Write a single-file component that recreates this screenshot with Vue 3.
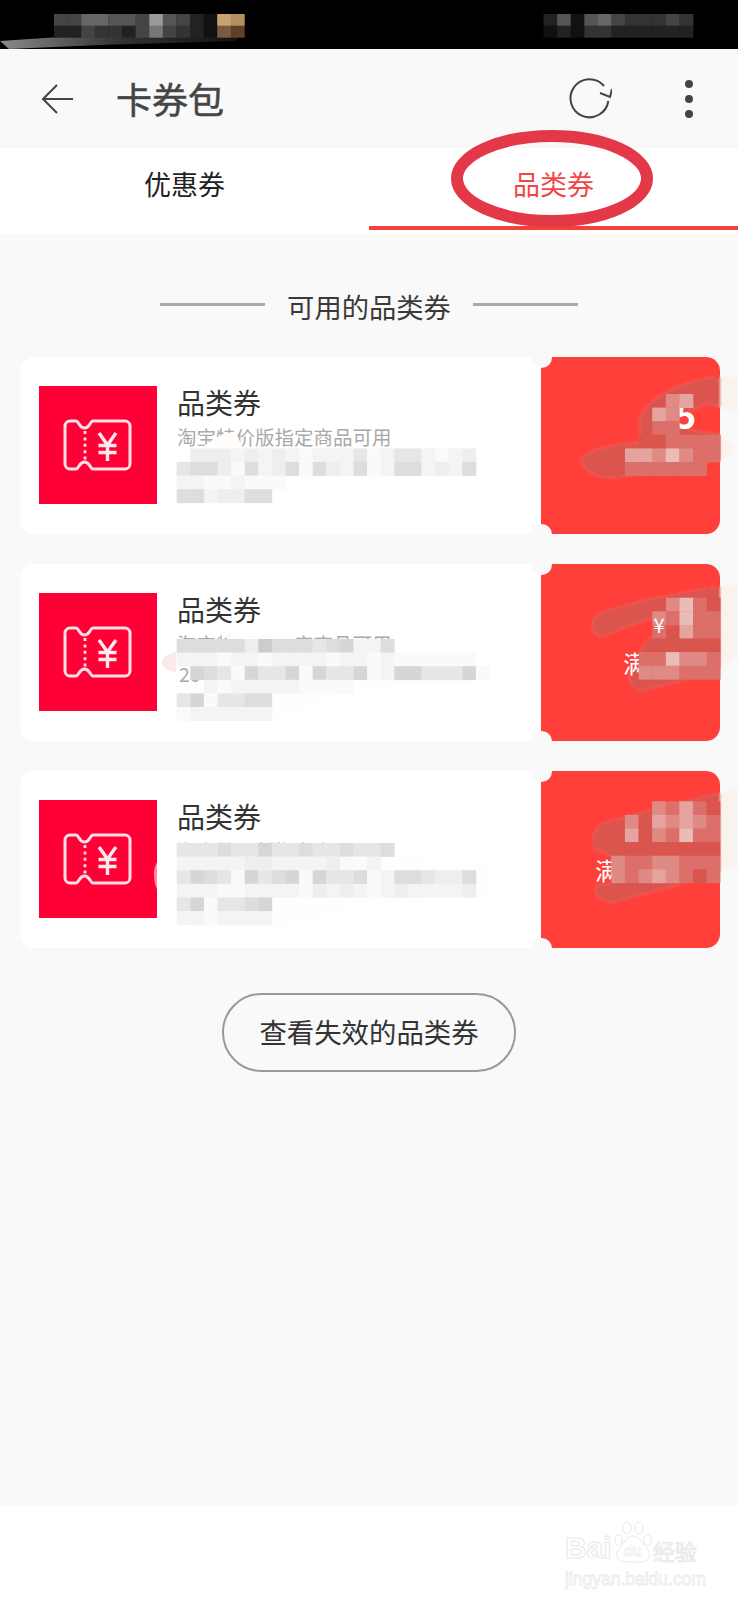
<template>
  <div class="page">
    <div class="status">
      <svg class="status-art" width="738" height="49" viewBox="0 0 738 49">
        <defs>
          <linearGradient id="smear" x1="0" x2="1" y1="0" y2="0">
            <stop offset="0" stop-color="#8a8a8a" />
            <stop offset="0.5" stop-color="#333" />
            <stop offset="1" stop-color="#111" />
          </linearGradient>
        </defs>
        <path d="M0 41 L60 37 L240 37 L235 41 L100 45 L9 49 Z" fill="url(#smear)" />
        <circle cx="561" cy="34" r="2" fill="#ddd" />
        <rect v-for="c in statusCells" :key="c.key" :x="c.x" :y="c.y" :width="c.w" :height="c.h" :fill="c.fill" />
      </svg>
    </div>

    <header class="topbar">
      <svg class="back" width="34" height="32" viewBox="0 0 34 32">
        <path d="M33 16 H3 M17 2 L3 16 L17 30" fill="none" stroke="#444" stroke-width="2" />
      </svg>
      <h1 class="title">卡券包</h1>
      <svg class="refresh" width="46" height="46" viewBox="0 0 46 46">
        <path d="M42.3 25 A19 19 0 1 1 38 10" fill="none" stroke="#444" stroke-width="2" />
        <path d="M34 17 L44 21 L46 13" fill="none" stroke="#444" stroke-width="2" />
      </svg>
      <div class="dots"><span></span><span></span><span></span></div>
    </header>

    <nav class="tabs">
      <div class="tab">优惠券</div>
      <div class="tab active">品类券</div>
    </nav>

    <main class="content">
      <div class="section-title">
        <span class="rule"></span>
        <span>可用的品类券</span>
        <span class="rule"></span>
      </div>

      <div class="cards">
        <div v-for="(card, i) in cards" :key="i" class="card-row">
          <div class="card">
            <div class="card-main">
              <div class="thumb">
                <svg width="118" height="118" viewBox="0 0 118 118">
                  <path
                    d="M31 35 H37 C40 35 40 42 45.5 42 C51 42 51 35 54 35 H86 a5 5 0 0 1 5 5 V78 a5 5 0 0 1 -5 5 H54 C51 83 51 76 45.5 76 C40 76 40 83 37 83 H31 a5 5 0 0 1 -5 -5 V40 a5 5 0 0 1 5 -5 Z"
                    fill="none" stroke="#ffdfe5" stroke-width="3"
                  />
                  <path d="M46 45 V74" fill="none" stroke="#ffdfe5" stroke-width="2.8" stroke-dasharray="3 3.4" />
                  <path d="M60 47 L68.5 59 L77 47 M59.5 59.5 H77.5 M59.5 66.5 H77.5 M68.5 59 V75" fill="none" stroke="#ffeaee" stroke-width="3.4" />
                </svg>
              </div>
              <div class="info">
                <div class="info-title">品类券</div>
                <div class="info-sub">淘宝特价版指定商品可用</div>
              </div>
            </div>
            <div class="stub"></div>
          </div>

          <!-- hand-drawn smears and mosaic that hide the private bits -->
          <svg class="smears" width="738" height="178" viewBox="0 0 738 178">
            <defs>
              <clipPath :id="`stub-${i}`"><rect x="541" y="0" width="179" height="177" rx="13" /></clipPath>
            </defs>
            <g class="soft">
              <path :d="card.smear" fill="#f9f3ef" />
              <path :d="card.smear" fill="#dc544e" :clip-path="`url(#stub-${i})`" />
            </g>
            <text v-for="t in card.stubText" :key="t.s" class="frag" :class="t.cls" :x="t.x" :y="t.y">{{ t.s }}</text>
            <path v-if="card.pink" :d="card.pink" :fill="card.pinkFill" :opacity="card.pinkOpacity" />
            <path :d="card.blot" fill="#fffefd" />
            <text v-for="t in card.textBits" :key="t.s" class="bit" :x="t.x" :y="t.y">{{ t.s }}</text>
            <g class="pixels">
              <rect v-for="c in cellsOf(card)" :key="c.key" :x="c.x" :y="c.y" :width="c.w" :height="c.h" :fill="c.fill" />
            </g>
            <text v-if="card.yen" class="frag yen" x="659" y="69">¥</text>
          </svg>
        </div>
      </div>

      <button class="expired">查看失效的品类券</button>
    </main>

    <footer class="footer">
      <div class="mark">
        <div class="mark-top">
          <span class="mark-bai">Bai</span>
          <svg class="paw" width="38" height="42" viewBox="0 0 38 42">
            <g fill="none" stroke="#e8e8e8" stroke-width="1">
              <ellipse cx="4.5" cy="19" rx="3.8" ry="5.5" />
              <ellipse cx="13" cy="7" rx="4.2" ry="6" />
              <ellipse cx="25" cy="7" rx="4.2" ry="6" />
              <ellipse cx="33.5" cy="19" rx="3.8" ry="5.5" />
              <path d="M19 15 C27 15 28 24 33 28 C38 33 35 41 27 41 H11 C3 41 0 33 5 28 C10 24 11 15 19 15 Z" />
            </g>
            <text class="paw-du" x="19" y="35">du</text>
          </svg>
          <span class="mark-cn">经验</span>
        </div>
        <div class="mark-url">jingyan.baidu.com</div>
      </div>
    </footer>

    <svg class="oval" width="202" height="97" viewBox="0 0 202 97">
      <ellipse cx="101" cy="48.5" rx="95" ry="42.5" fill="none" stroke="#e23848" stroke-width="12" />
    </svg>
  </div>
</template>

<script setup>
const CELL = 13.6
const tones = {
  // smear tones over the red stub
  A: '#d9554e',
  B: '#dd6f6a',
  C: '#e08a85',
  D: '#e6a4a0',
  E: '#e9bcb8',
  // pale tones over the white card
  i: '#d6d6d6',
  h: '#e6e6e6',
  g: '#f4f4f4',
  j: '#fafafa',
  // skin coloured bit in the status bar
  T: '#c9a070',
  U: '#b58f60',
  V: '#7a5a40',
  W: '#5f3f25',
}
const shade = (ch) => tones[ch] || `#${ch}${ch}${ch}`

function toCells(blocks, prefix) {
  const out = []
  blocks.forEach((b, bi) => {
    b.rows.forEach((row, r) => {
      ;[...row].forEach((ch, col) => {
        if (ch === '-') return
        out.push({
          key: `${prefix}${bi}-${r}-${col}`,
          x: b.x + col * CELL,
          y: b.y + r * (b.rh || CELL),
          w: CELL + 0.3,
          h: (b.rh || CELL) + 0.3,
          fill: shade(ch),
        })
      })
    })
  })
  return out
}

const statusCells = toCells(
  [
    { x: 54, y: 14, rh: 11.7, rows: ['446655495421TU', '224332474321VW'] },
    { x: 543.5, y: 14, rh: 11.7, rows: ['25156433343', '12133222222'] },
  ],
  's',
)

const cellsOf = (card) => toCells(card.blocks, 'c')

const cards = [
  {
    stubText: [{ s: '5', cls: 'big', x: 675, y: 72 }],
    smear:
      'M639 66 C642 45 672 26 715 20 L738 20 L738 55 L722 51 L707 46 L663 68 L722 78 L733 88 L733 98 L715 103 C690 110 650 118 605 121 C590 118 580 110 582 101 C590 92 615 87 642 85 Z',
    blot: 'M172 113 L208 86 L225 76 L236 76 L243 91 L476 96 L478 119 L280 125 L276 150 L176 150 Z',
    blocks: [
      {
        x: 176.7,
        y: 91.4,
        rows: ['-eeegegegjggghjghhgjge', 'hddejdgedjdegdjgddgegd', 'ggjjgjjj', 'ddgeedd'],
      },
      { x: 625, y: 37, rows: ['---CD--', '--DC---', '--BB---', '-AABBBB', 'DDCECBB', 'BBBBBB-'] },
    ],
    textBits: [],
  },
  {
    yen: true,
    stubText: [{ s: '满', cls: 'mid', x: 623, y: 109 }],
    smear:
      'M592 61 C592 53 600 48 610 46 C630 40 640 37 660 33 L707 24 L738 21 L738 93 L720 103 L693 114 L640 127 C632 123 628 118 630 111 L642 83 L650 74 L673 61 L652 54 L623 64 L603 73 C596 72 592 68 592 61 Z',
    pink: 'M176 88 C165 90 161 96 162 100 C163 104 170 108 176 108 Z',
    pinkFill: '#fbe9e9',
    pinkOpacity: 1,
    blot: 'M176 75 L226 75 L232 69 L290 69 L297 75 L395 75 L395 89 L470 91 L480 105 L470 118 L350 125 L276 155 L176 155 Z',
    blocks: [
      {
        x: 176.7,
        y: 75,
        rows: [
          'dddddecdddhdiggd',
          'gggjggjggggjggjgjjjjjj',
          '-idhjihhijihhijgiihhhij',
          '--gjgggggjjjj',
          'hijhhdd',
          'jgggggg',
        ],
      },
      { x: 638.7, y: 33.7, rows: ['--CEBA', '-CBEBB', '-B-DBB', '-AAAAA', 'BBECCB', 'CCCBBB'] },
    ],
    textBits: [
      { s: '20', x: 179, y: 118 },
      { s: '(', x: 179, y: 148 },
    ],
  },
  {
    stubText: [{ s: '满', cls: 'mid', x: 595, y: 109 }],
    smear:
      'M593 69 C594 60 598 54 603 52 L650 39 L720 22 L738 17 L738 94 L720 100 L677 114 L610 132 L597 125 L595 115 L610 112 L610 85 L605 82 L593 77 Z',
    pink: 'M176 72 C160 82 153 95 154 104 C154 118 162 130 176 145 Z',
    pinkFill: '#fff',
    pinkOpacity: 0.55,
    blot: 'M176 72 L395 72 L395 85 L490 95 L490 125 L350 135 L272 160 L200 160 C180 150 176 140 176 72 Z',
    blocks: [
      {
        x: 176.7,
        y: 72,
        rows: [
          'hhhdhhihhdhhdhhd',
          'gggggeeggggejjg',
          'hidhjihdijihhdjgddheed',
          'gggjjggggjegegjgegggge',
          'hijhhdi',
          'ggjgggg',
        ],
      },
      {
        x: 611.3,
        y: 30.3,
        rows: ['---CBDBA', '-CADCDCB', '-DACBEBB', 'AAAAAAAA', 'CBBCCBBB', 'CBCDCBAB'],
      },
    ],
    textBits: [{ s: 'C', x: 179, y: 149 }],
  },
]
</script>

<style scoped>
.page {
  position: relative;
  width: 738px;
  height: 1600px;
  overflow: hidden;
  display: flex;
  flex-direction: column;
  background: #f9f9f9;
  font-family: "Noto Sans CJK SC", "Liberation Sans", sans-serif;
  color: #333;
}
.status {
  height: 49px;
  background: #000;
  flex: none;
}
.status-art {
  display: block;
}
.topbar {
  height: 99px;
  flex: none;
  display: flex;
  align-items: center;
  padding-left: 40px;
}
.back {
  flex: none;
}
.title {
  margin: 0 0 2px 42px;
  font-size: 36px;
  font-weight: 400;
  -webkit-text-stroke: 0.5px #454545;
  color: #454545;
  line-height: 1;
  flex: 1;
}
.refresh {
  margin-right: 73px;
}
.dots {
  display: flex;
  flex-direction: column;
  gap: 7px;
  margin-right: 45px;
}
.dots span {
  width: 8px;
  height: 8px;
  border-radius: 50%;
  background: #444;
}
.tabs {
  height: 86px;
  flex: none;
  background: #fff;
  display: flex;
}
.tab {
  width: 50%;
  height: 82px;
  box-sizing: border-box;
  line-height: 72px;
  text-align: center;
  font-size: 27px;
  color: #222;
}
.tab.active {
  color: #ef4747;
  border-bottom: 4px solid #f5403c;
}
.content {
  flex: 1;
  display: flex;
  flex-direction: column;
  align-items: center;
}
.section-title {
  margin-top: 52px;
  height: 40px;
  display: flex;
  align-items: center;
  gap: 22px;
  font-size: 27.3px;
  color: #3a3a3a;
}
.rule {
  width: 105px;
  height: 3px;
  margin-bottom: 4px;
  background: #aaa;
}
.cards {
  margin-top: 31px;
  width: 100%;
  display: flex;
  flex-direction: column;
  gap: 30px;
}
.card-row {
  position: relative;
  height: 177px;
}
.card {
  margin: 0 18px 0 20px;
  height: 177px;
  display: flex;
  border-radius: 14px;
  overflow: hidden;
}
.card-main {
  width: 521px;
  background: #fff;
  display: flex;
  padding: 29px 0 0 19px;
  box-sizing: border-box;
}
.thumb {
  width: 118px;
  height: 118px;
  background: #ff0036;
  flex: none;
}
.thumb svg {
  display: block;
}
.info {
  margin: -2px 0 0 20px;
}
.info-title {
  font-size: 28px;
  line-height: 36px;
  color: #333;
}
.info-sub {
  margin-top: 3px;
  font-size: 19.5px;
  line-height: 28px;
  color: #a9a9a9;
}
.stub {
  position: relative;
  flex: 1;
  background: #ff403a;
}
.stub::before,
.stub::after {
  content: "";
  position: absolute;
  left: -10.5px;
  width: 21px;
  height: 21px;
  border-radius: 50%;
  background: #f9f9f9;
}
.stub::before {
  top: -10.5px;
}
.stub::after {
  bottom: -10.5px;
}
.smears {
  position: absolute;
  left: 0;
  top: 0;
  pointer-events: none;
}
.soft {
  filter: blur(1px);
}
.pixels {
  filter: blur(0.5px);
}
.frag {
  fill: #fff;
  font-family: "Noto Sans CJK SC", "Liberation Sans", sans-serif;
}
.frag.big {
  font-size: 36px;
  font-weight: 700;
}
.frag.mid {
  font-size: 24px;
}
.frag.yen {
  font-size: 20px;
  text-anchor: middle;
}
.bit {
  fill: #a9a9a9;
  font-size: 19.5px;
  font-family: "Noto Sans CJK SC", "Liberation Sans", sans-serif;
}
.expired {
  margin-top: 45px;
  width: 294px;
  height: 79px;
  padding: 0 0 4px;
  border: 2px solid #999;
  border-radius: 40px;
  background: transparent;
  font-family: inherit;
  font-size: 27.4px;
  color: #333;
}
.footer {
  height: 95px;
  flex: none;
  background: #fff;
  display: flex;
  justify-content: flex-end;
  padding: 16px 32px 0 0;
  box-sizing: border-box;
}
.mark-top {
  display: flex;
  align-items: flex-end;
  height: 42px;
}
.mark-bai {
  font-family: "Liberation Sans", sans-serif;
  font-weight: 700;
  font-size: 30px;
  line-height: 30px;
  color: #fff;
  -webkit-text-stroke: 1px #e8e8e8;
}
.paw {
  margin: 0 1px 0 2px;
}
.paw-du {
  font-family: "Liberation Sans", sans-serif;
  font-size: 15px;
  font-weight: 700;
  text-anchor: middle;
  fill: #fff;
  stroke: #e8e8e8;
  stroke-width: 0.6;
}
.mark-cn {
  font-size: 22px;
  line-height: 26px;
  color: #fff;
  -webkit-text-stroke: 1px #e8e8e8;
}
.mark-url {
  margin-top: 6px;
  font-family: "Liberation Sans", sans-serif;
  font-size: 17.5px;
  line-height: 20px;
  color: #fff;
  -webkit-text-stroke: 0.8px #eaeaea;
}
.oval {
  position: absolute;
  left: 451px;
  top: 130px;
}
</style>
